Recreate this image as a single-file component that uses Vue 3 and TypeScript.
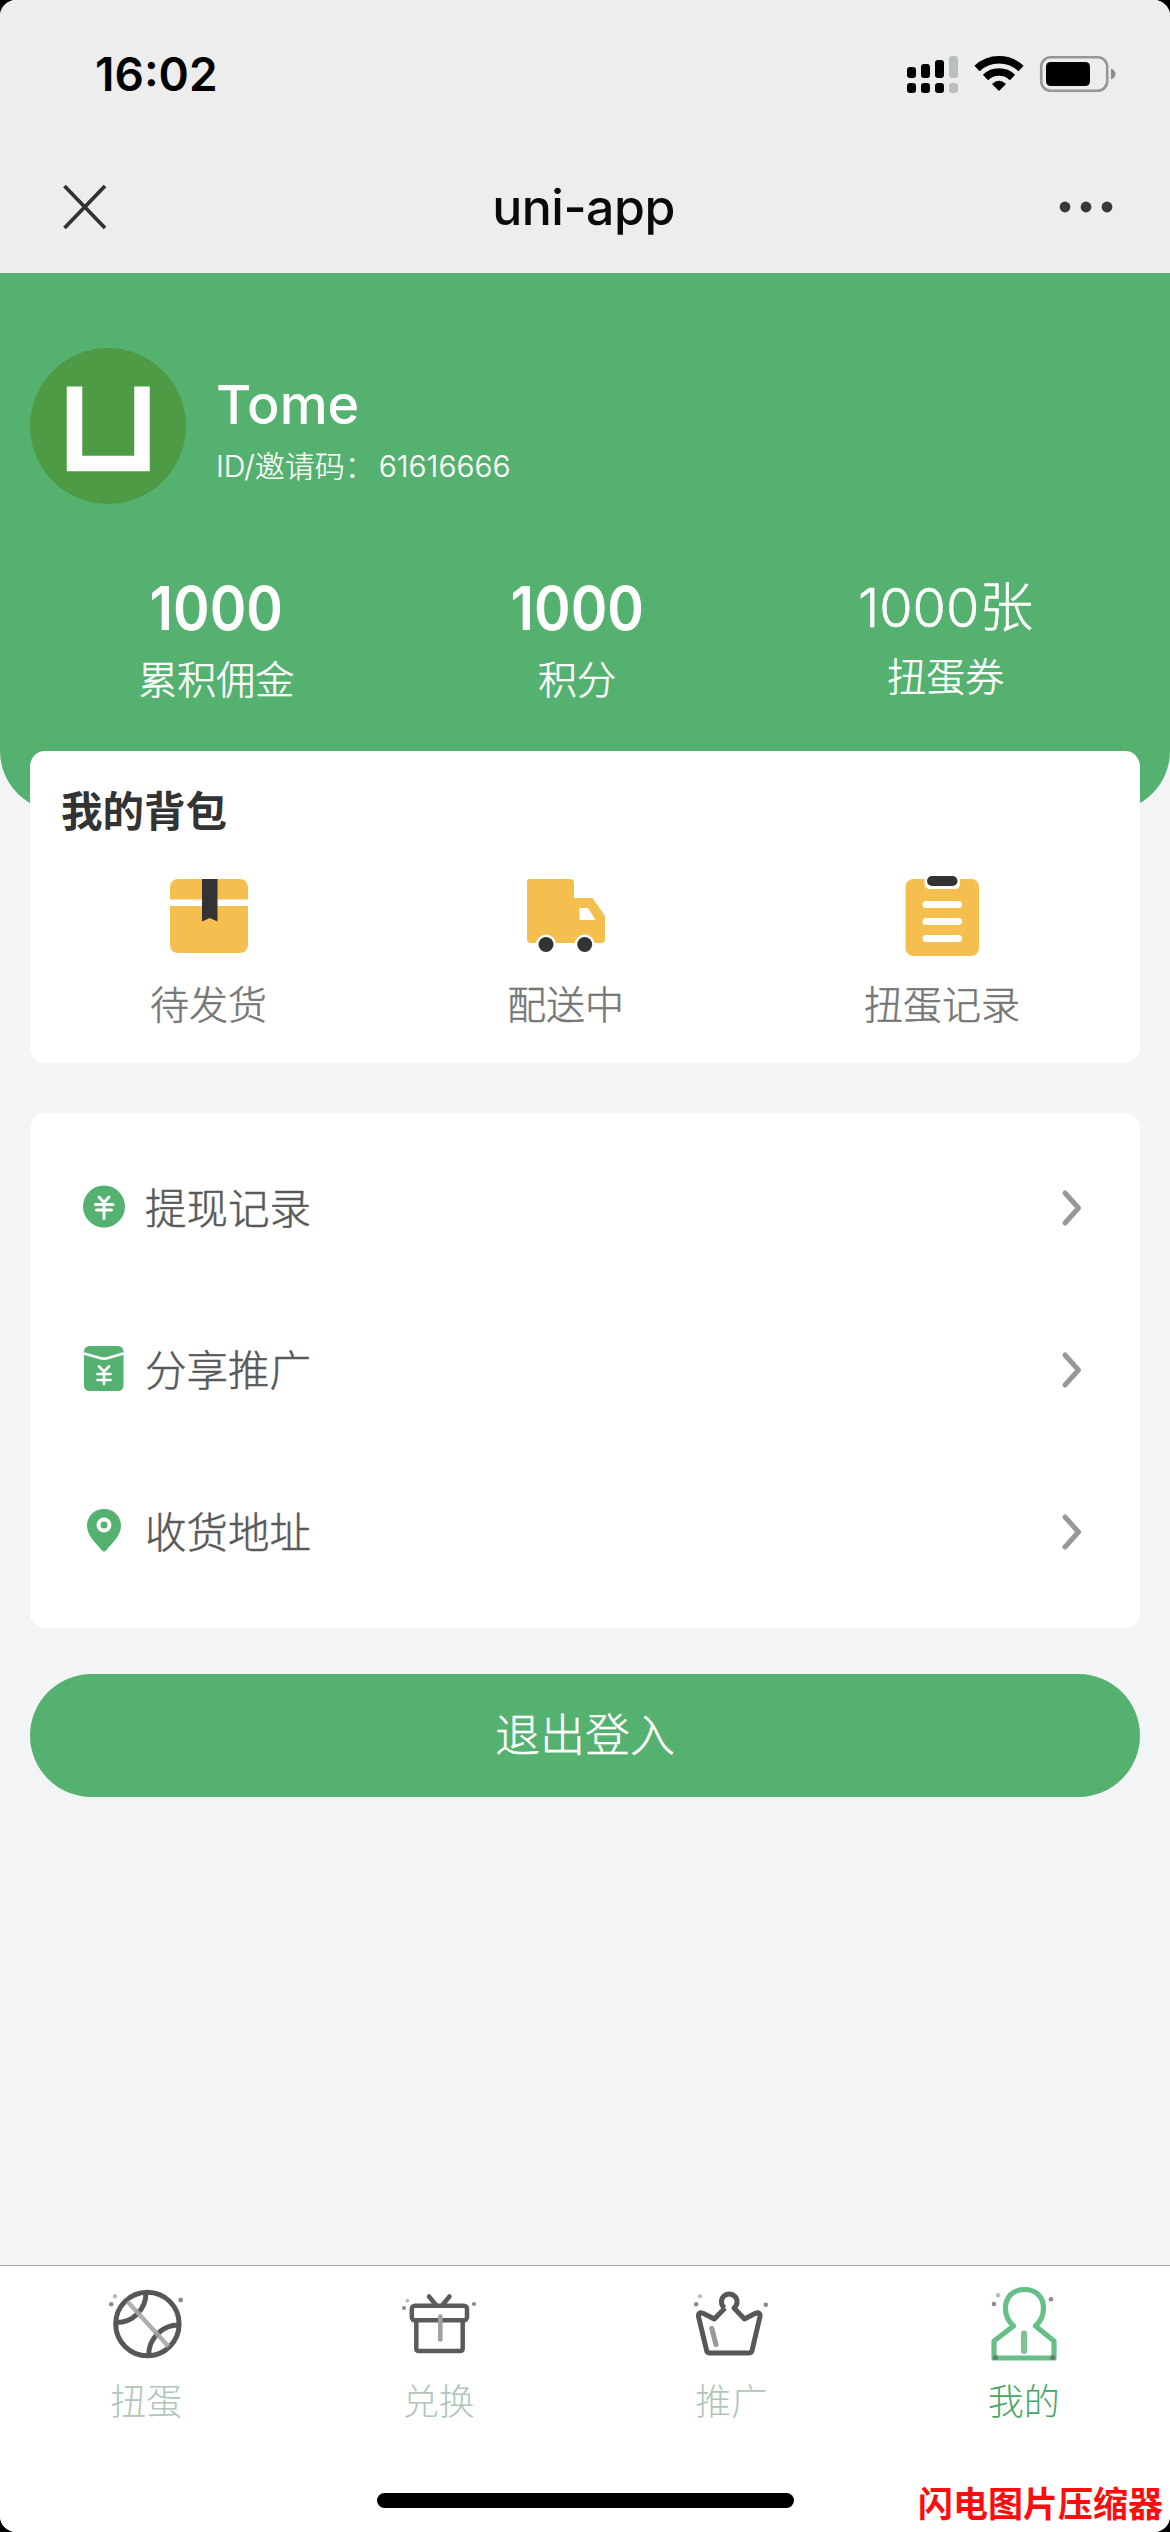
<script setup lang="ts">
interface Stat {
  value: string
  label: string
  kind: string
}

interface Entry {
  icon: 'coin' | 'envelope' | 'pin'
  label: string
}

const stats: Stat[] = [
  { value: '1000', label: '累积佣金', kind: 'commission' },
  { value: '1000', label: '积分', kind: 'points' },
  { value: '1000张', label: '扭蛋券', kind: 'coupon' },
]

const entries: Entry[] = [
  { icon: 'coin', label: '提现记录' },
  { icon: 'envelope', label: '分享推广' },
  { icon: 'pin', label: '收货地址' },
]
</script>

<template>
  <div class="device">
    <div class="screen">
      <div class="status-bar">
        <span class="time">16:02</span>
        <svg class="status-icons" width="212" height="42" viewBox="905 53 212 42">
          <g fill="#000">
            <rect x="907" y="67" width="9" height="11" rx="3" />
            <rect x="921" y="64" width="9" height="14" rx="3" />
            <rect x="935" y="60" width="9" height="18" rx="3" />
            <rect x="907" y="83" width="9" height="10" rx="3" />
            <rect x="921" y="83" width="9" height="10" rx="3" />
            <rect x="935" y="83" width="9" height="10" rx="3" />
          </g>
          <g fill="#b9bfbe">
            <rect x="949" y="56" width="9" height="22" rx="3" />
            <rect x="949" y="83" width="9" height="10" rx="3" />
          </g>
          <g fill="none" stroke="#000" stroke-width="7.5">
            <path d="M977 68.5 A32 32 0 0 1 1021 68.5" />
            <path d="M985.5 77.5 A19.500 19.500 0 0 1 1012.500 77.500" />
          </g>
          <path d="M992 84 Q999 77.500 1006 84 L999 91 Z" fill="#000" />
          <rect x="1041.200" y="57.200" width="66" height="33.600" rx="9.500" fill="none" stroke="#979797" stroke-width="2.600" />
          <rect x="1046" y="62" width="44" height="24" rx="4.500" fill="#000" />
          <path d="M1111 68.500 Q1115.500 70.500 1115.500 74 T1111 79.500 Z" fill="#8c8c8c" />
        </svg>
      </div>

      <div class="nav-bar">
        <svg class="close" width="46" height="46" viewBox="0 0 46 46">
          <path d="M2.500 2 L43 44 M43 2 L2.500 44" stroke="#303332" stroke-width="3.800" />
        </svg>
        <span class="nav-title">uni-app</span>
        <svg class="more" width="54" height="12" viewBox="0 0 54 12">
          <circle cx="6" cy="6" r="5.400" />
          <circle cx="27" cy="6" r="5.400" />
          <circle cx="48" cy="6" r="5.400" />
        </svg>
      </div>

      <header class="profile">
        <div class="user">
          <svg class="avatar" width="156" height="156" viewBox="0 0 156 156">
            <circle cx="78" cy="78" r="78" fill="#4f9a45" />
            <path d="M44.500 38.500 V115.500 H112 V38.500" fill="none" stroke="#fff" stroke-width="15.500" />
          </svg>
          <div class="identity">
            <div class="name">Tome</div>
            <div class="uid">ID/邀请码：<span class="uid-number">61616666</span></div>
          </div>
        </div>
        <div class="stats">
          <div v-for="s in stats" :key="s.kind" class="stat" :class="s.kind">
            <span class="stat-value">{{ s.value }}</span>
            <span class="stat-label">{{ s.label }}</span>
          </div>
        </div>
      </header>

      <section class="bag card">
        <h2 class="bag-title">我的背包</h2>
        <div class="bag-items">
          <div class="bag-item">
            <svg width="80" height="84" viewBox="169 875 80 84">
              <path d="M170 899.500 V888 Q170 879 179 879 H239 Q248 879 248 888 V899.500 Z" fill="#f5bf4f" />
              <path d="M170 906 H248 V944 Q248 953 239 953 H179 Q170 953 170 944 Z" fill="#f5bf4f" />
              <path d="M202 879 H217.500 V921.500 L209.700 918 L202 921.500 Z" fill="#333" />
            </svg>
            <span>待发货</span>
          </div>
          <div class="bag-item">
            <svg width="80" height="84" viewBox="526 875 80 84">
              <path d="M530 879 H570 Q574 879 574 883 V898 H592.500 L605 916 V939 Q605 943 601 943 H531 Q527 943 527 939 V882 Q527 879 530 879 Z" fill="#f5bf4f" />
              <path d="M579.500 908 H588 L595.500 920 H579.500 Z" fill="#fff" />
              <circle cx="546" cy="944.500" r="10" fill="#fff" />
              <circle cx="584.700" cy="944.500" r="10" fill="#fff" />
              <circle cx="546" cy="944.500" r="7.500" fill="#333" />
              <circle cx="584.700" cy="944.500" r="7.500" fill="#333" />
            </svg>
            <span>配送中</span>
          </div>
          <div class="bag-item wide">
            <svg width="80" height="84" viewBox="902 875 80 84">
              <rect x="905.500" y="879" width="73.500" height="77" rx="8" fill="#f5bf4f" />
              <path d="M924.500 878 H960 V883 Q960 889 954 889 H930.500 Q924.500 889 924.500 883 Z" fill="#fff" />
              <rect x="927" y="876" width="30.500" height="10" rx="5" fill="#333" />
              <rect x="922.500" y="901" width="39.500" height="7" rx="3.500" fill="#fff" />
              <rect x="922.500" y="918" width="39.500" height="7" rx="3.500" fill="#fff" />
              <rect x="922.500" y="935" width="39.500" height="7" rx="3.500" fill="#fff" />
            </svg>
            <span>扭蛋记录</span>
          </div>
        </div>
      </section>

      <section class="menu card">
        <div v-for="e in entries" :key="e.icon" class="row">
          <svg v-if="e.icon === 'coin'" class="row-icon" width="44" height="48" viewBox="0 0 44 48">
            <circle cx="22" cy="23.500" r="21" fill="#54b16f" />
            <path d="M17 14 L22 19.500 L27 14 M13.500 21.500 H31 M14.500 27 H29.500 M22 19.500 V35.500" fill="none" stroke="#fff" stroke-width="3" stroke-linecap="round" />
          </svg>
          <svg v-else-if="e.icon === 'envelope'" class="row-icon" width="44" height="48" viewBox="0 0 44 48">
            <rect x="2" y="1" width="39.500" height="45" rx="5.500" fill="#54b16f" />
            <path d="M2 8.500 L17 12.800 Q22 14.500 27 12.800 L41.500 8.500" fill="none" stroke="#fff" stroke-width="2.600" />
            <path d="M17 21.500 L22 26.500 L27 21.500 M15.500 29 H28.500 M15.500 35 H28.500 M22 26.500 V39" fill="none" stroke="#fff" stroke-width="2.700" stroke-linecap="round" />
          </svg>
          <svg v-else class="row-icon" width="44" height="48" viewBox="0 0 44 48">
            <path d="M22 2 C12 2 5 9.500 5 18.500 C5 29 14 36 19.500 43 Q22 46 24.500 43 C30 36 39 29 39 18.500 C39 9.500 32 2 22 2 Z" fill="#54b16f" />
            <circle cx="22" cy="18" r="5.500" fill="none" stroke="#fff" stroke-width="4" />
          </svg>
          <span class="row-label">{{ e.label }}</span>
          <svg class="chevron" width="24" height="40" viewBox="0 0 24 40">
            <path d="M5 5 L18.500 20 L5 35" fill="none" stroke="#979998" stroke-width="5" stroke-linecap="round" stroke-linejoin="round" />
          </svg>
        </div>
      </section>

      <button class="logout">退出登入</button>

      <nav class="tab-bar">
        <div class="tab">
          <svg width="84" height="80" viewBox="104 2284 84 80">
            <g fill="none" stroke="#575757" stroke-width="5">
              <circle cx="147.400" cy="2324" r="31.700" />
              <path d="M146 2292.500 A29.500 29.500 0 0 1 116.500 2322.500" />
              <path d="M148.700 2355.500 A30 30 0 0 1 178.700 2325" />
            </g>
            <path d="M127.500 2301.500 L168.500 2346.500" stroke="#a6a6a6" stroke-opacity=".9" stroke-width="4.600" />
            <circle cx="115" cy="2296.300" r="2.200" fill="#bbb" />
            <circle cx="111.200" cy="2304.300" r="2.300" fill="#8a8a8a" />
            <circle cx="180.700" cy="2300" r="2.400" fill="#8a8a8a" />
          </svg>
          <span>扭蛋</span>
        </div>
        <div class="tab">
          <svg width="84" height="80" viewBox="397 2284 84 80">
            <g fill="none" stroke="#5b5b5b" stroke-width="4.500" stroke-linecap="round">
              <rect x="411.800" y="2305.800" width="55.200" height="14.400" rx="3" />
              <path d="M416.300 2320.500 V2348.500 Q416.300 2351 419 2351 H460 Q462.700 2351 462.700 2348.500 V2320.500" />
              <path d="M429 2296.500 L436 2305 M449.500 2296.500 L442.500 2305" />
            </g>
            <path d="M440.300 2316.500 V2339.500" stroke="#a0a0a0" stroke-width="4.600" stroke-linecap="round" />
            <circle cx="407.500" cy="2300.700" r="1.900" fill="#bbb" />
            <circle cx="404" cy="2308" r="2" fill="#8a8a8a" />
            <circle cx="474" cy="2304" r="2.100" fill="#8a8a8a" />
          </svg>
          <span>兑换</span>
        </div>
        <div class="tab">
          <svg width="84" height="80" viewBox="689 2284 84 80">
            <path d="M725 2308 L714.300 2319 L703 2313.300 Q698 2311.500 698.500 2316.500 L706.500 2350 Q707 2353 710 2353 H748.500 Q751.500 2353 752.200 2350 L760 2316.500 Q760.500 2311.500 755.500 2313.300 L744.500 2319 L734 2308 A7.800 7.800 0 1 0 724.500 2308" fill="none" stroke="#575757" stroke-width="5" stroke-linejoin="round" />
            <path d="M711.800 2328.500 L716 2344.500" stroke="#999" stroke-width="5" stroke-linecap="round" />
            <circle cx="700" cy="2296.300" r="2.100" fill="#bbb" />
            <circle cx="696.200" cy="2304.300" r="2.300" fill="#8a8a8a" />
            <circle cx="765.800" cy="2304.700" r="2.300" fill="#8a8a8a" />
          </svg>
          <span>推广</span>
        </div>
        <div class="tab active">
          <svg width="84" height="80" viewBox="982 2284 84 80">
            <path d="M1013.500 2326 C1008 2321 1005.500 2315 1005.500 2308.500 C1005.500 2297 1013 2289.500 1024.500 2289.500 C1036 2289.500 1043.500 2297 1043.500 2308.500 C1043.500 2315 1041 2321 1035.500 2326 L1054 2341 V2358 H994 V2341 Z" fill="none" stroke="#66bf86" stroke-width="5.200" stroke-linejoin="round" />
            <path d="M1024 2333.500 V2351" stroke="#7cc293" stroke-width="6" stroke-linecap="round" />
            <circle cx="995.500" cy="2357.500" r="2.600" fill="#68806f" />
            <circle cx="1052.700" cy="2357.500" r="2.600" fill="#68806f" />
            <circle cx="998" cy="2295.300" r="2.200" fill="#aebfb4" />
            <circle cx="994" cy="2304" r="2.300" fill="#8a8a8a" />
            <circle cx="1051" cy="2299.300" r="2.300" fill="#8a8a8a" />
          </svg>
          <span>我的</span>
        </div>
      </nav>
      <div class="home-indicator"></div>
      <div class="watermark">闪电图片压缩器</div>
    </div>
  </div>
</template>

<style>
body {
  margin: 0;
  background: #000;
}
</style>

<style scoped>
.device {
  width: 1170px;
  height: 2532px;
  background: #000;
  font-family: 'Inter', 'Noto Sans CJK SC', sans-serif;
}

.screen {
  position: relative;
  display: flex;
  flex-direction: column;
  width: 1170px;
  height: 2532px;
  border-radius: 16px;
  overflow: hidden;
  background: #f2f4f6;
}

svg {
  display: block;
  flex: none;
}

.status-bar {
  display: flex;
  justify-content: space-between;
  align-items: center;
  box-sizing: border-box;
  height: 148px;
  padding: 0 53px 0 95px;
  background: #ededed;
}

.time {
  font-size: 46px;
  font-weight: 600;
  line-height: 60px;
}

.nav-bar {
  display: flex;
  justify-content: space-between;
  align-items: center;
  box-sizing: border-box;
  height: 125px;
  padding: 0 57px 7px 62px;
  background: #ededed;
}

.nav-title {
  font-size: 50px;
  font-weight: 500;
  line-height: 60px;
  letter-spacing: -0.5px;
  color: #0a0a0a;
}

.more {
  fill: #383838;
}

.profile {
  box-sizing: border-box;
  flex: none;
  height: 538px;
  padding: 75px 30px 0;
  border-radius: 0 0 60px 60px;
  background: #55b16f;
  color: #fff;
}

.user {
  display: flex;
  gap: 30px;
  height: 156px;
}

.identity {
  padding-top: 25px;
}

.name {
  font-size: 54px;
  font-weight: 500;
  line-height: 64px;
}

.uid {
  margin-top: 11px;
  font-size: 30px;
  font-weight: 300;
  line-height: 36px;
  white-space: nowrap;
  -webkit-text-stroke: 0.2px currentColor;
}

.uid-number {
  margin-left: 4px;
}

.stats {
  display: flex;
  justify-content: space-around;
  margin-top: 68px;
}

.stat {
  display: flex;
  flex-direction: column;
  align-items: center;
  white-space: nowrap;
}

.commission {
  width: 156px;
}

.points {
  width: 132px;
}

.coupon {
  width: 172px;
}

.stat-value {
  font-size: 61px;
  font-weight: 600;
  line-height: 72px;
  transform: scaleX(0.91);
}

.stat-label {
  margin-top: 15px;
  font-size: 39px;
  font-weight: 300;
  line-height: 42px;
  -webkit-text-stroke: 0.5px currentColor;
}

.coupon .stat-value {
  font-size: 54px;
  font-weight: 300;
  transform: none;
  -webkit-text-stroke: 0.5px currentColor;
}

.coupon .stat-label {
  margin-top: 12px;
}

.card {
  box-sizing: border-box;
  flex: none;
  width: 1110px;
  margin-left: 30px;
  border-radius: 15px;
  background: #fff;
}

.bag {
  position: relative;
  height: 312px;
  margin-top: -60px;
  padding-top: 36px;
}

.bag-title {
  margin: 0 0 0 31px;
  font-size: 41.500px;
  font-weight: 700;
  line-height: 50px;
  color: #333;
}

.bag-items {
  display: flex;
  justify-content: space-around;
  margin-top: 38px;
}

.bag-item {
  display: flex;
  flex-direction: column;
  align-items: center;
  width: 117px;
  font-size: 39px;
  font-weight: 300;
  line-height: 46px;
  white-space: nowrap;
  color: #757776;
  -webkit-text-stroke: 0.5px currentColor;
}

.bag-item.wide {
  width: 156px;
}

.bag-item span {
  margin-top: 23px;
}

.menu {
  height: 515px;
  margin-top: 50px;
  padding: 14px 56px 0 52px;
}

.row {
  display: flex;
  align-items: center;
  height: 162px;
}

.row-icon {
  margin-top: -2px;
}

.row-label {
  flex: 1;
  margin: 2px 0 0 19px;
  font-size: 41.500px;
  font-weight: 300;
  line-height: 50px;
  color: #585959;
  -webkit-text-stroke: 0.5px currentColor;
}

.logout {
  flex: none;
  width: 1110px;
  height: 123px;
  margin: 46px 0 0 30px;
  padding: 0 0 6px;
  border: 0;
  border-radius: 62px;
  background: #55b16f;
  font-family: inherit;
  font-size: 45px;
  font-weight: 300;
  color: #fff;
  -webkit-text-stroke: 0.4px currentColor;
}

.tab-bar {
  display: flex;
  box-sizing: border-box;
  height: 267px;
  margin-top: auto;
  border-top: 1px solid #a9aba9;
  background: #fff;
}

.tab {
  display: flex;
  flex: 1;
  flex-direction: column;
  align-items: center;
  padding-top: 18px;
  font-size: 36px;
  font-weight: 300;
  line-height: 44px;
  color: #b0c6b9;
}

.tab span {
  margin-top: 16px;
}

.tab.active {
  color: #45a765;
}

.home-indicator {
  position: absolute;
  left: 377px;
  bottom: 24px;
  width: 417px;
  height: 15px;
  border-radius: 8px;
  background: #000;
}

.watermark {
  position: absolute;
  right: 7px;
  bottom: 7px;
  font-size: 35px;
  font-weight: 700;
  line-height: 42px;
  color: #fb0d0d;
}
</style>
